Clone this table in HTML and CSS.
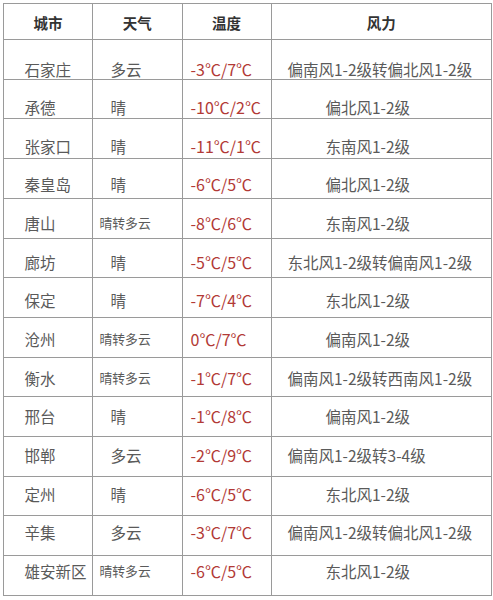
FILE: index.html
```html
<!DOCTYPE html>
<html lang="zh">
<head>
<meta charset="utf-8">
<link rel="stylesheet" href="styles.css">
</head>
<body>
<table class="weather">
  <colgroup>
    <col class="c-city"><col class="c-sky"><col class="c-temp"><col class="c-wind">
  </colgroup>
  <thead>
    <tr><th>城市</th><th>天气</th><th>温度</th><th>风力</th></tr>
  </thead>
  <tbody>
    <tr><td class="city">石家庄</td><td class="sky">多云</td><td class="temp">-3℃/7℃</td><td class="wind">偏南风1-2级转偏北风1-2级</td></tr>
    <tr><td class="city">承德</td><td class="sky">晴</td><td class="temp">-10℃/2℃</td><td class="wind short">偏北风1-2级</td></tr>
    <tr><td class="city">张家口</td><td class="sky">晴</td><td class="temp">-11℃/1℃</td><td class="wind short">东南风1-2级</td></tr>
    <tr><td class="city">秦皇岛</td><td class="sky">晴</td><td class="temp">-6℃/5℃</td><td class="wind short">偏北风1-2级</td></tr>
    <tr><td class="city">唐山</td><td class="sky small">晴转多云</td><td class="temp">-8℃/6℃</td><td class="wind short">东南风1-2级</td></tr>
    <tr><td class="city">廊坊</td><td class="sky">晴</td><td class="temp">-5℃/5℃</td><td class="wind">东北风1-2级转偏南风1-2级</td></tr>
    <tr><td class="city">保定</td><td class="sky">晴</td><td class="temp">-7℃/4℃</td><td class="wind short">东北风1-2级</td></tr>
    <tr><td class="city">沧州</td><td class="sky small">晴转多云</td><td class="temp">0℃/7℃</td><td class="wind short">偏南风1-2级</td></tr>
    <tr><td class="city">衡水</td><td class="sky small">晴转多云</td><td class="temp">-1℃/7℃</td><td class="wind">偏南风1-2级转西南风1-2级</td></tr>
    <tr><td class="city">邢台</td><td class="sky">晴</td><td class="temp">-1℃/8℃</td><td class="wind short">偏南风1-2级</td></tr>
    <tr><td class="city">邯郸</td><td class="sky">多云</td><td class="temp">-2℃/9℃</td><td class="wind">偏南风1-2级转3-4级</td></tr>
    <tr><td class="city">定州</td><td class="sky">晴</td><td class="temp">-6℃/5℃</td><td class="wind short">东北风1-2级</td></tr>
    <tr><td class="city">辛集</td><td class="sky">多云</td><td class="temp">-3℃/7℃</td><td class="wind">偏南风1-2级转偏北风1-2级</td></tr>
    <tr><td class="city">雄安新区</td><td class="sky small">晴转多云</td><td class="temp">-6℃/5℃</td><td class="wind short">东北风1-2级</td></tr>
  </tbody>
</table>
</body>
</html>
```

FILE: styles.css
```css
html, body {
  margin: 0;
  padding: 0;
  background: #ffffff;
}

body {
  padding: 3px 0 0 3px;
  font-family: "Noto Sans CJK SC", "Noto Sans", sans-serif;
  color: #5a5a5a;
}

.weather {
  border-collapse: collapse;
  table-layout: fixed;
  width: 488px;
  border: 1px solid #8a8a8a;
}

.c-city { width: 89px; }
.c-sky { width: 89.5px; }
.c-temp { width: 89px; }
.c-wind { width: 220.5px; }

.weather th,
.weather td {
  border: 1px solid #9a9a9a;
  padding: 0;
  line-height: 20px;
  white-space: nowrap;
  overflow: hidden;
}

.weather thead tr {
  height: 36px;
}

.weather th {
  font-size: 14.5px;
  font-weight: 700;
  color: #333333;
  text-align: center;
  vertical-align: middle;
  padding-top: 3px;
}

.weather tbody tr {
  height: 39.71px;
}

.weather td {
  vertical-align: top;
  font-size: 15.5px;
  text-align: left;
}

.weather .city { padding-left: 20.5px; }
.weather .sky { padding-left: 17.5px; }
.weather .sky.small { padding-left: 6.5px; font-size: 12.8px; }
.weather .temp { padding-left: 8px; font-size: 16px; color: #b23a36; }
.weather .wind { padding-left: 16px; }
.weather .wind.short { padding-left: 54px; }

.weather tbody tr:nth-child(1) td { padding-top: 18.5px; }
.weather tbody tr:nth-child(2) td { padding-top: 17.4px; }
.weather tbody tr:nth-child(3) td { padding-top: 16.4px; }
.weather tbody tr:nth-child(4) td { padding-top: 15.3px; }
.weather tbody tr:nth-child(5) td { padding-top: 14.3px; }
.weather tbody tr:nth-child(6) td { padding-top: 13.2px; }
.weather tbody tr:nth-child(7) td { padding-top: 12.1px; }
.weather tbody tr:nth-child(8) td { padding-top: 11.1px; }
.weather tbody tr:nth-child(9) td { padding-top: 10px; }
.weather tbody tr:nth-child(10) td { padding-top: 9px; }
.weather tbody tr:nth-child(11) td { padding-top: 7.9px; }
.weather tbody tr:nth-child(12) td { padding-top: 6.8px; }
.weather tbody tr:nth-child(13) td { padding-top: 5.8px; }
.weather tbody tr:nth-child(14) td { padding-top: 4.7px; }
```
